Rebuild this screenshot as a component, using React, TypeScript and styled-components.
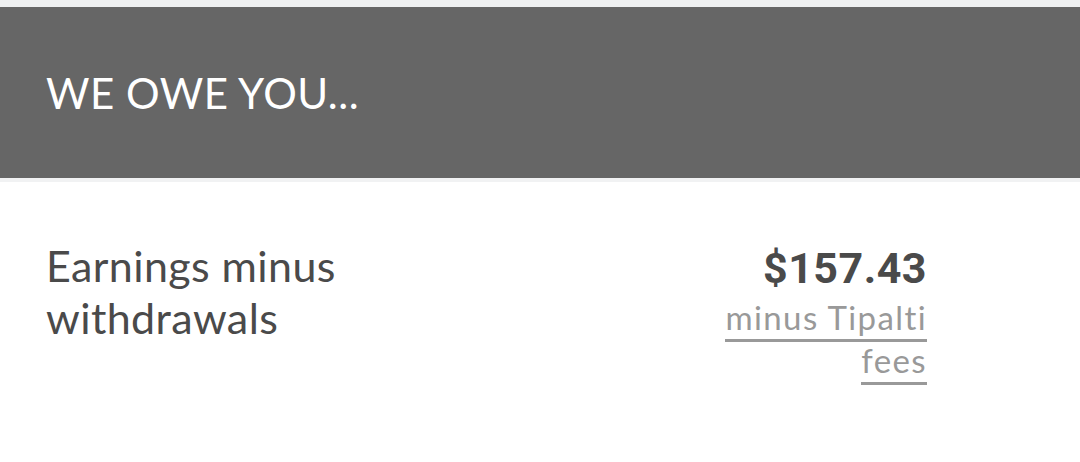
import styled, { createGlobalStyle } from 'styled-components';

const GlobalStyle = createGlobalStyle`
  html, body {
    margin: 0;
    padding: 0;
    background: #ffffff;
  }
  body {
    font-family: Lato, 'Open Sans', sans-serif;
    font-variant-ligatures: none;
  }
`;

const Page = styled.div`
  width: 1080px;
  height: 462px;
  overflow: hidden;
  background: #ffffff;
  border-top: 7px solid #eff0f1;
  box-sizing: border-box;
`;

const Banner = styled.header`
  height: 171px;
  display: flex;
  align-items: center;
  padding: 0 46px;
  background: #666666;
  border-bottom: 4px solid #f1f2f3;
`;

const BannerTitle = styled.h1`
  margin: 0;
  font-family: Lato, sans-serif;
  font-weight: 400;
  font-size: 42px;
  color: #ffffff;
  letter-spacing: 0.5px;
`;

const Row = styled.div`
  display: flex;
  justify-content: space-between;
  align-items: flex-start;
  padding: 58px 153px 0 46px;
`;

const Label = styled.div`
  font-family: Lato, sans-serif;
  font-size: 43px;
  line-height: 52px;
  letter-spacing: 0.4px;
  color: #4a4a4a;
  width: 360px;
`;

const AmountBox = styled.div`
  display: flex;
  flex-direction: column;
  align-items: flex-end;
  text-align: right;
  width: 210px;
`;

const Amount = styled.div`
  font-family: Roboto, sans-serif;
  font-weight: 700;
  font-size: 43px;
  line-height: 56px;
  color: #4a4a4a;
  letter-spacing: 0.5px;
`;

const FeeLink = styled.a`
  font-family: Lato, sans-serif;
  font-size: 33px;
  line-height: 43px;
  letter-spacing: 1.4px;
  color: #999999;
  text-decoration: none;
  border-bottom: 3px solid #999999;
  padding-bottom: 2px;
`;

export default function App() {
  return (
    <>
      <GlobalStyle />
      <Page>
        <Banner>
          <BannerTitle>WE OWE YOU...</BannerTitle>
        </Banner>
        <Row>
          <Label>Earnings minus withdrawals</Label>
          <AmountBox>
            <Amount>$157.43</Amount>
            <div>
              <FeeLink href="#">minus Tipalti fees</FeeLink>
            </div>
          </AmountBox>
        </Row>
      </Page>
    </>
  );
}
